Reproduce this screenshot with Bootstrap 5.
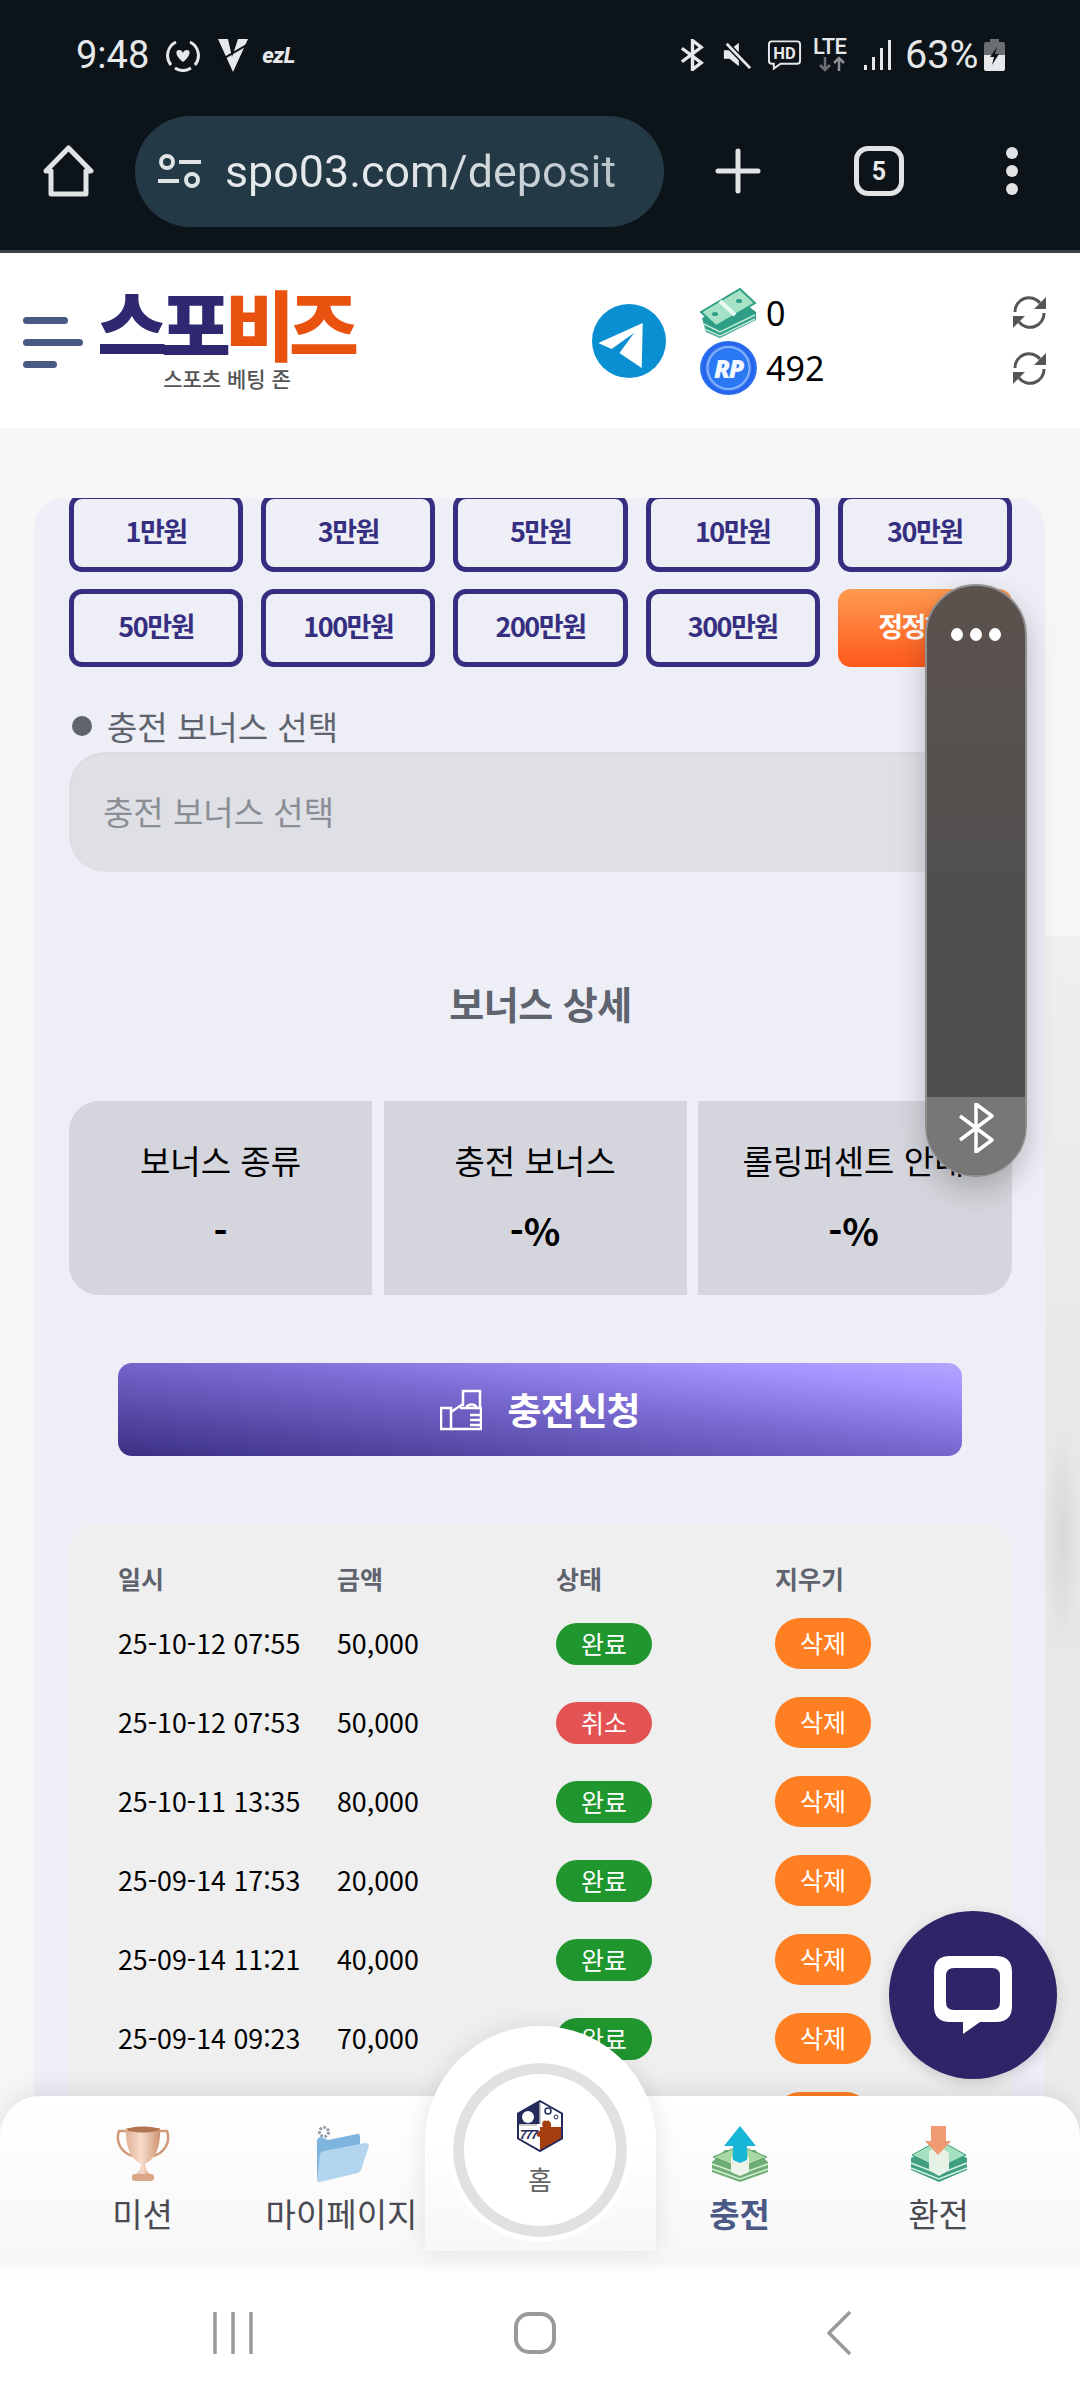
<!DOCTYPE html>
<html lang="ko">
<head>
    <meta charset="UTF-8">
    <meta name="viewport" content="width=device-width, initial-scale=1.0">
    <title>spo03 - deposit</title>
    <link href="https://cdn.jsdelivr.net/npm/bootstrap@5.3.0/dist/css/bootstrap.min.css" rel="stylesheet">
    <style>
        body {
            width: 1080px;
            height: 2400px;
            overflow: hidden;
            position: relative;
            background: #fff;
            font-family: "Noto Sans CJK KR", "Noto Sans", sans-serif;
        }
        /* phone chrome */
        .chrome-top { height: 253px; background: #0c1319; border-bottom: 3px solid #3a4248; color: #e6e8ea; }
        .status-row { height: 110px; padding: 0 75px 0 76px; font-family: Roboto, sans-serif; }
        .status-time { font-size: 38px; line-height: 1; margin-right: 17px; }
        .status-pct { width: 71px; font-size: 39.5px; line-height: 1; margin: 0 8px 0 13px; white-space: nowrap; }
        .ezl-text { font: italic 800 22px Roboto, sans-serif; margin-left: 12px; letter-spacing: -.5px; }
        .lte-box { width: 37px; line-height: 1; margin: 0 14px 0 11px; }
        .lte-text { font-size: 22px; font-weight: 500; line-height: 18px; display: block; letter-spacing: -.5px; }
        .tool-row { height: 140px; padding: 0 0 18px 43px; }
        .url-pill {
            width: 529px; height: 111px; margin: 0 51px 0 41px; padding-left: 23px; border-radius: 56px;
            background: #243946; font: 400 44.8px Roboto, sans-serif;
        }
        .url-text { margin-left: 24px; background: linear-gradient(90deg, #e6e9eb 40%, #b7c2c9); -webkit-background-clip: text; background-clip: text; color: transparent; }
        .tab-count {
            width: 50px; height: 50px; margin: 0 102px 0 93px; border: 5px solid #e1e3e5; border-radius: 14px;
            font: 700 25px/1 Roboto, sans-serif;
        }
        .dot-col { gap: 6px; }
        .dot-col i { width: 12px; height: 12px; border-radius: 50%; background: #e1e3e5; display: block; }
        /* site header */
        .site-head { height: 175px; background: #fff; padding: 0 34px 0 23px; }
        .burger { width: 72px; gap: 15px; padding-top: 4px; }
        .burger i { height: 7px; border-radius: 4px; background: #4a5a82; display: block; }
        .brand-box { width: 260px; margin-top: -2px; margin-right: 237px; text-align: center; }
        .brand-name { font-size: 76px; font-weight: 900; line-height: 66px; letter-spacing: -6px; color: #2d2870; white-space: nowrap; }
        .brand-name span { color: #e8510e; }
        .brand-sub { font-size: 21px; font-weight: 500; line-height: 26px; color: #555; margin-top: 10px; padding-left: 4px; }
        .money-col { margin-left: 34px; gap: 5px; }
        .money-row { height: 50px; gap: 9px; font: 400 34px/1 "Noto Sans", sans-serif; color: #000; }
        .coin-rp {
            width: 57px; height: 54px; border-radius: 50%; margin: -2px 0;
            background: radial-gradient(circle, #2a78f2 50%, #9cc2ff 52%, #1f62ea 60%, #4f8cff 90%, #1747d0);
            color: #f4f8ff; font: italic 900 25px/54px "Noto Sans", sans-serif; text-align: center; letter-spacing: -1.5px;
        }
        .refresh-col { gap: 23px; }
        /* page */
        .page-main {
            height: 1708px; overflow: hidden; padding: 70px 35px 0 34px;
            background: radial-gradient(ellipse closest-side, #d8d8d8, rgba(216,216,216,0)) right 1000px / 35px 220px no-repeat,
                linear-gradient(180deg, #efefef, #e6e6e6 50%, #ececec) right 508px / 35px 1200px no-repeat, #f6f6f6;
        }
        .deposit-panel { height: 1640px; background: #edeef6; border-radius: 30px 30px 0 0; padding: 0 33px 0 35px; overflow: hidden; }
        .amount-grid { display: grid; grid-template-columns: repeat(5, 1fr); gap: 17px 18px; margin-top: -4px; }
        .amount-btn {
            height: 78px; padding: 0 0 3px; border: 5px solid #362e80; border-radius: 13px; background: transparent;
            color: #362e80; font-size: 27px; font-weight: 700; letter-spacing: -1.5px; white-space: nowrap;
        }
        .amount-btn.reset-btn { border: 0; color: #fff; background: linear-gradient(180deg, #ff9a50, #ff591b); }
        .field-label { margin: 38px 0 5px; height: 42px; font-size: 33px; line-height: 42px; color: #5f636e; gap: 15px; padding-left: 3px; }
        .field-label i { width: 20px; height: 20px; border-radius: 50%; background: #5f636e; display: block; }
        .bonus-select {
            height: 120px; padding: 0 34px; border: 0; border-radius: 36px;
            background-color: #dee0e5; color: #8b8e95; font-size: 33px; box-shadow: inset 0 2px 2px rgba(0,0,0,.02);
        }
        .detail-title { margin-top: 107px; font-size: 38px; line-height: 48px; font-weight: 700; color: #5f636e; text-align: center; letter-spacing: -.5px; }
        .detail-grid { display: grid; grid-template-columns: 303px 303px 314px; column-gap: 11.5px; margin-top: 74px; height: 194px; border-radius: 30px; overflow: hidden; }
        .detail-cell { background: #d5d6dd; text-align: center; padding-top: 36px; color: #000; white-space: nowrap; }
        .detail-cell:last-child { padding-right: 3px; }
        .detail-name { font-size: 33px; line-height: 46px; }
        .detail-val { font-size: 38px; line-height: 50px; font-weight: 700; margin-top: 22px; }
        .apply-btn {
            width: 844px; height: 93px; margin: 68px 0 0 49px; border: 0; border-radius: 14px; color: #fff; gap: 25px;
            background: linear-gradient(to top right, #3b3084, #7a6bd2 55%, #a593ff 85%, #b3a6ff);
            font-size: 37px; font-weight: 700; letter-spacing: -1px;
        }
        .history-box { margin-top: 67px; height: 640px; border-radius: 30px; background: #efefef; padding: 31px 0 0 49px; overflow: hidden; }
        .history-table { width: 876px; table-layout: fixed; margin: 0; --bs-table-bg: transparent; }
        .history-table th { height: 50px; padding: 0; font-size: 25px; font-weight: 600; color: #5f636e; vertical-align: middle; }
        .history-table td { height: 79px; padding: 0; font-size: 26.8px; color: #000; vertical-align: middle; }
        .state-tag, .del-tag { width: 96px; padding: 0; border-radius: 25px; color: #fff; font-size: 25px; font-weight: 400; display: block; text-align: center; }
        .state-tag { height: 42px; line-height: 40px; border-radius: 21px; }
        .del-tag { height: 51px; line-height: 49px; background: #ff7f22; }
        .tag-ok { background: #1f962e; }
        .tag-cancel { background: #e35353; }
        /* bottom nav */
        .bottom-nav {
            height: 169px; margin-top: -40px; position: relative; padding: 0 43px; border-radius: 40px 40px 0 0;
            background: linear-gradient(180deg, #fff, #f7f7f7);
            box-shadow: 0 -6px 24px rgba(0,0,0,.08);
            display: grid; grid-template-columns: repeat(5, 199px);
        }
        .nav-cell { padding-top: 30px; text-align: center; color: #4a4a52; font-size: 33px; line-height: 40px; white-space: nowrap; }
        .nav-cell svg { display: block; margin: 0 auto 11px; height: 56px; }
        .nav-cell.now { color: #4a5a85; font-weight: 700; }
        .home-dome {
            position: absolute; left: 425px; top: -70px; width: 231px; height: 225px; border-radius: 116px 116px 0 0;
            background: linear-gradient(180deg, #fff 50%, #f7f7f7); box-shadow: 0 0 26px rgba(0,0,0,.1);
            padding: 32px 23px 0;
        }
        .home-ring { width: 184px; height: 184px; border-radius: 50%; background: #fff; border: 5px solid #fff; box-shadow: inset 0 0 0 11px #e1e1e1; text-align: center; padding-top: 37px; color: #666; font-size: 26px; line-height: 32px; }
        .home-ring svg { display: block; margin: 0 auto 11px; }
        .android-bar { height: 135px; background: #fff; padding: 0 0 0 213px; }
        .home-key { margin-left: 261px; }
        .back-key { margin-left: 270px; }
        /* floating things */
        .edge-pill {
            position: absolute; left: 925px; top: 584px; width: 102px; height: 593px; border-radius: 51px; overflow: hidden;
            border: 2px solid #8f8f8f; box-shadow: 0 12px 30px rgba(0,0,0,.22);
            background: linear-gradient(180deg, #5c524d, #4f4f4f 55%);
        }
        .pill-dots { gap: 7px; padding-top: 42px; height: 511px; }
        .pill-dots i { width: 12px; height: 13px; border-radius: 50%; background: #fff; display: block; }
        .pill-foot { height: 80px; background: #777; text-align: center; padding-top: 6px; }
        .chat-fab {
            position: absolute; left: 889px; top: 1911px; width: 168px; height: 168px; border-radius: 50%;
            background: #2e2568; box-shadow: 0 4px 14px rgba(0,0,0,.15);
        }
    </style>
</head>
<body>
    <div class="chrome-top">
        <div class="status-row d-flex align-items-center">
            <span class="status-time">9:48</span>
            <svg width="34" height="34" viewBox="0 0 34 34" fill="none">
                <path d="M10 4A15 15 0 0 0 5 27M24 4A15 15 0 0 1 29 27M9 30A15 15 0 0 0 25 30" stroke="#e6e8ea" stroke-width="3"/>
                <path d="M17 24C9 18 9 12 13 12C15 12 16.500 13 17 15C17.500 13 19 12 21 12C25 12 25 18 17 24Z" fill="#e6e8ea"/>
            </svg>
            <svg width="34" height="36" viewBox="0 0 34 36" class="ms-3"><path d="M2 2H12L16 20L22 2H32L17 35Z" fill="#e6e8ea"/><path d="M0 26L34 6" stroke="#0c1319" stroke-width="2"/></svg>
            <span class="ezl-text">ezL</span>
            <span class="ms-auto d-flex align-items-center">
                <svg width="27" height="32" viewBox="0 0 28 32" fill="none" stroke="#e6e8ea" stroke-width="3.500"><path d="M3 9L23 24L14 31V1L23 8L3 23"/></svg>
                <svg width="30" height="30" viewBox="0 0 32 30" class="ms-3"><path d="M2 10H8L18 2V27L8 19H2Z" fill="#e6e8ea"/><path d="M5 3L30 29" stroke="#0c1319" stroke-width="6"/><path d="M5 3L30 29" stroke="#e6e8ea" stroke-width="3"/></svg>
                <svg width="35" height="32" viewBox="0 0 36 32" style="margin-left:15px"><path d="M5 2H31Q34 2 34 5V22Q34 25 31 25H14L7 30V25H5Q2 25 2 22V5Q2 2 5 2Z" fill="none" stroke="#e6e8ea" stroke-width="2"/><text x="18" y="20" text-anchor="middle" font-family="Roboto" font-size="17" font-weight="700" fill="#e6e8ea">HD</text></svg>
                <span class="lte-box">
                    <span class="lte-text">LTE</span>
                    <svg width="30" height="16" viewBox="0 0 30 16" fill="none" stroke-width="2.500" class="d-block ms-1"><path d="M8 1V14M3 9L8 14L13 9" stroke="#6b7074"/><path d="M22 15V2M17 7L22 2L27 7" stroke="#8c9094"/></svg>
                </span>
                <svg width="28" height="30" viewBox="0 0 28 30" fill="#e6e8ea"><rect x="0" y="25" width="3" height="5"/><rect x="8" y="17" width="3" height="13"/><rect x="16" y="8" width="3" height="22"/><rect x="24" y="0" width="3" height="30"/></svg>
                <span class="status-pct">63%</span>
                <svg width="21" height="32" viewBox="0 0 21 32"><path d="M6 0H15V3H19Q21 3 21 5V16H0V5Q0 3 2 3H6Z" fill="#6a6e72"/><path d="M0 16H21V30Q21 32 19 32H2Q0 32 0 30Z" fill="#e6e8ea"/><path d="M13 8L6 18H10L8 26L15 15H11Z" fill="#0c1319"/></svg>
            </span>
        </div>
        <div class="tool-row d-flex align-items-center">
            <svg width="51" height="52" viewBox="0 0 51 52" fill="none" stroke="#e1e3e5" stroke-width="5" stroke-linejoin="round"><path d="M3 26L25.500 3L48 26H43V49H8V26Z"/></svg>
            <div class="url-pill d-flex align-items-center">
                <svg width="43" height="34" viewBox="0 0 43 34" fill="none" stroke="#dfe3e6" stroke-width="4"><circle cx="9" cy="8" r="6"/><path d="M21 8H43M0 27H21"/><circle cx="34" cy="26" r="6"/></svg>
                <span class="url-text">spo03.com/deposit</span>
            </div>
            <svg width="46" height="46" viewBox="0 0 46 46" stroke="#e1e3e5" stroke-width="5" stroke-linecap="round"><path d="M23 3V43M3 23H43"/></svg>
            <div class="tab-count d-flex align-items-center justify-content-center">5</div>
            <div class="dot-col d-flex flex-column"><i></i><i></i><i></i></div>
        </div>
    </div>

    <header class="site-head d-flex align-items-center">
        <div class="burger d-flex flex-column">
            <i style="width:45px"></i><i style="width:60px"></i><i style="width:34px"></i>
        </div>
        <div class="brand-box">
            <div class="brand-name">스포<span>비즈</span></div>
            <div class="brand-sub">스포츠 베팅 존</div>
        </div>
        <svg width="74" height="74" viewBox="0 0 74 74"><circle cx="37" cy="37" r="37" fill="#0a8fd2"/><path d="M50.700 19L6.300 39L19.600 45L42 29L27.500 49L49.700 64Z" fill="#fff"/></svg>
        <div class="money-col d-flex flex-column">
            <div class="money-row d-flex align-items-center">
                <svg width="57" height="50" viewBox="0 0 57 50">
                    <path d="M2 30L40 12L56 24V32L20 50L6 44Z" fill="#2f9e86"/>
                    <path d="M4 36L20 44L55 27M4 41L20 48L55 31" stroke="#bfe8d6" stroke-width="1.500" fill="none"/>
                    <path d="M1 24L40 1L55 15L16 38Z" fill="#a6e3c6" stroke="#2f9e86" stroke-width="2"/>
                    <path d="M20 13L35 27" stroke="#eafaf2" stroke-width="4"/>
                    <ellipse cx="15" cy="26" rx="3" ry="2" fill="#2f9e86"/><ellipse cx="39" cy="13" rx="3" ry="2" fill="#2f9e86"/>
                </svg>
                <span>0</span>
            </div>
            <div class="money-row d-flex align-items-center">
                <div class="coin-rp">RP</div>
                <span>492</span>
            </div>
        </div>
        <div class="refresh-col d-flex flex-column ms-auto">
            <svg width="33" height="33" viewBox="0 0 33 33" fill="none" stroke="#555" stroke-width="3"><path d="M2 16A14 14 0 0 1 27 7"/><path d="M31 17A14 14 0 0 1 6 26"/><path d="M33 1V13H21Z" fill="#555" stroke="none"/><path d="M0 32V20H12Z" fill="#555" stroke="none"/></svg>
            <svg width="33" height="33" viewBox="0 0 33 33" fill="none" stroke="#555" stroke-width="3"><path d="M2 16A14 14 0 0 1 27 7"/><path d="M31 17A14 14 0 0 1 6 26"/><path d="M33 1V13H21Z" fill="#555" stroke="none"/><path d="M0 32V20H12Z" fill="#555" stroke="none"/></svg>
        </div>
    </header>

    <main class="page-main">
        <div class="deposit-panel">
            <div class="amount-grid">
                <button class="btn amount-btn">1만원</button>
                <button class="btn amount-btn">3만원</button>
                <button class="btn amount-btn">5만원</button>
                <button class="btn amount-btn">10만원</button>
                <button class="btn amount-btn">30만원</button>
                <button class="btn amount-btn">50만원</button>
                <button class="btn amount-btn">100만원</button>
                <button class="btn amount-btn">200만원</button>
                <button class="btn amount-btn">300만원</button>
                <button class="btn amount-btn reset-btn">정정하기</button>
            </div>
            <div class="field-label d-flex align-items-center"><i></i>충전 보너스 선택</div>
            <select class="form-select bonus-select"><option>충전 보너스 선택</option></select>
            <div class="detail-title">보너스 상세</div>
            <div class="detail-grid">
                <div class="detail-cell"><div class="detail-name">보너스 종류</div><div class="detail-val">-</div></div>
                <div class="detail-cell"><div class="detail-name">충전 보너스</div><div class="detail-val">-%</div></div>
                <div class="detail-cell"><div class="detail-name">롤링퍼센트 안내</div><div class="detail-val">-%</div></div>
            </div>
            <button class="btn apply-btn d-flex align-items-center justify-content-center">
                <svg width="42" height="42" viewBox="0 0 42 42" fill="none" stroke="#fff" stroke-width="2.500"><rect x="1" y="19" width="10" height="21"/><path d="M11 23L23 15M23 17V2H40V19M20 19H41V40H11M30 26H42M30 31H42M30 36H42M26 19A6 6 0 0 1 37 19"/></svg>
                <span>충전신청</span>
            </button>
            <div class="history-box">
                <table class="table table-borderless history-table">
                    <thead><tr><th>일시</th><th>금액</th><th>상태</th><th>지우기</th></tr></thead>
                    <tbody>
                        <tr><td>25-10-12 07:55</td><td>50,000</td><td><span class="badge state-tag tag-ok">완료</span></td><td><span class="badge del-tag">삭제</span></td></tr>
                        <tr><td>25-10-12 07:53</td><td>50,000</td><td><span class="badge state-tag tag-cancel">취소</span></td><td><span class="badge del-tag">삭제</span></td></tr>
                        <tr><td>25-10-11 13:35</td><td>80,000</td><td><span class="badge state-tag tag-ok">완료</span></td><td><span class="badge del-tag">삭제</span></td></tr>
                        <tr><td>25-09-14 17:53</td><td>20,000</td><td><span class="badge state-tag tag-ok">완료</span></td><td><span class="badge del-tag">삭제</span></td></tr>
                        <tr><td>25-09-14 11:21</td><td>40,000</td><td><span class="badge state-tag tag-ok">완료</span></td><td><span class="badge del-tag">삭제</span></td></tr>
                        <tr><td>25-09-14 09:23</td><td>70,000</td><td><span class="badge state-tag tag-ok">완료</span></td><td><span class="badge del-tag">삭제</span></td></tr>
                        <tr><td></td><td></td><td></td><td><span class="badge del-tag">삭제</span></td></tr>
                    </tbody>
                </table>
            </div>
        </div>
    </main>

    <nav class="bottom-nav">
        <div class="nav-cell">
            <svg width="54" height="56" viewBox="0 0 54 56">
                <defs><linearGradient id="cupGrad" x1="0" x2="1"><stop offset="0" stop-color="#e2b094"/><stop offset=".45" stop-color="#f7dccb"/><stop offset="1" stop-color="#cf9472"/></linearGradient></defs>
                <path d="M11 5H3C-1 17 6 27 17 30M43 5H51C55 17 48 27 37 30" fill="none" stroke="#cf9a7a" stroke-width="2.500"/>
                <path d="M10 2H44C45 22 38 36 27 38C16 36 9 22 10 2Z" fill="url(#cupGrad)"/>
                <ellipse cx="27" cy="3.500" rx="16" ry="3" fill="#b07652"/>
                <path d="M25 37H29C29 43 31 46 35 49H19C23 46 25 43 25 37Z" fill="url(#cupGrad)"/>
                <rect x="16" y="48" width="22" height="7" rx="3" fill="#dba685"/>
            </svg>
            미션
        </div>
        <div class="nav-cell">
            <svg width="55" height="56" viewBox="0 0 55 56">
                <circle cx="10" cy="6" r="4.500" fill="none" stroke="#8d9aa6" stroke-width="3" stroke-dasharray="2.500 1.500"/>
                <path d="M3 14Q5 9 9 12L14 14L43 8Q46 7 46 11V42L3 54Z" fill="#7fb4de"/>
                <path d="M3 54L6 28Q7 25 10 25L51 17Q55 17 55 20L47 44Q46 46 44 47L6 56Q3 56 3 54Z" fill="#b3d5ee"/>
            </svg>
            마이페이지
        </div>
        <div></div>
        <div class="nav-cell now">
            <svg width="58" height="56" viewBox="0 0 58 56">
                <path d="M1 36L14 24H44L57 36V46L29 56L1 46Z" fill="#6fae74"/>
                <path d="M1 38L29 48L57 38M1 43L29 53L57 43" stroke="#d8efd6" stroke-width="1.500" fill="none"/>
                <path d="M2 31L29 20L56 31L29 42Z" fill="#a7d8a4" stroke="#5f9f66"/>
                <path d="M20 31V46L29 50L38 46V31L29 36Z" fill="#eef3ea"/>
                <path d="M29 0L45 20H36V34L29 37L22 34V20H13Z" fill="#17b5d6"/>
            </svg>
            충전
        </div>
        <div class="nav-cell">
            <svg width="58" height="56" viewBox="0 0 58 56">
                <path d="M1 32L29 16L57 32V44L29 56L1 44Z" fill="#3f9f80"/>
                <path d="M1 37L29 48L57 37M1 42L29 53L57 42" stroke="#d4f0e2" stroke-width="1.500" fill="none"/>
                <path d="M2 29L29 14L56 29L29 42Z" fill="#a5e0c0" stroke="#3f9f80"/>
                <path d="M19 25L29 20L39 27V44L29 50L19 44Z" fill="#e6f2e6"/>
                <path d="M21 0H36V15H41L28 29L15 15H21Z" fill="#f09a73"/>
            </svg>
            환전
        </div>
        <div class="home-dome">
            <div class="home-ring">
                <svg width="46" height="52" viewBox="0 0 46 52">
                    <path d="M23 1L45 13.500V38.500L23 51L1 38.500V13.500Z" fill="#fff"/>
                    <path d="M23 1L1 13.500V24H23Z" fill="#232a5c"/>
                    <circle cx="11" cy="17" r="6" fill="#fff"/>
                    <path d="M45 27H34C35 23 32 19 29 21C26 19 24 24 26 27H23V31C19 31 18 37 23 37V51L45 38.500Z" fill="#a63f10"/>
                    <path d="M23 1V24M1 25H20" stroke="#b9b9b9" stroke-width="1.500"/>
                    <text x="3" y="39" font-family="Liberation Sans" font-style="italic" font-weight="700" font-size="12" fill="#232a5c" letter-spacing="-1">777</text>
                    <circle cx="31" cy="11" r="3" fill="none" stroke="#232a5c" stroke-width="1.500"/><circle cx="39" cy="17" r="2" fill="none" stroke="#232a5c"/>
                    <path d="M23 1L45 13.500V38.500L23 51L1 38.500V13.500Z" fill="none" stroke="#232a5c" stroke-width="2"/>
                </svg>
                홈
            </div>
        </div>
    </nav>

    <div class="android-bar d-flex align-items-center">
        <svg width="40" height="42" viewBox="0 0 40 42" stroke="#9a9a9a" stroke-width="3.500"><path d="M2 0V42M20 0V42M38 0V42"/></svg>
        <svg width="42" height="42" viewBox="0 0 42 42" fill="none" stroke="#9a9a9a" stroke-width="4" class="home-key"><rect x="2" y="2" width="38" height="38" rx="13"/></svg>
        <svg width="25" height="44" viewBox="0 0 25 44" fill="none" stroke="#9a9a9a" stroke-width="3.500" stroke-linejoin="round" class="back-key"><path d="M24 1L3 22L24 43"/></svg>
    </div>

    <div class="edge-pill">
        <div class="pill-dots d-flex justify-content-center"><i></i><i></i><i></i></div>
        <div class="pill-foot">
            <svg width="36" height="50" viewBox="0 0 36 50" fill="none" stroke="#fff" stroke-width="3.500" stroke-linejoin="round"><path d="M2 13L34 37L18 49V1L34 13L2 37"/></svg>
        </div>
    </div>

    <div class="chat-fab d-flex align-items-center justify-content-center">
        <svg width="78" height="78" viewBox="0 0 78 78"><path fill="#fff" fill-rule="evenodd" d="M16 0H62Q78 0 78 16V50Q78 66 62 66H46L29 78V66H16Q0 66 0 50V16Q0 0 16 0ZM20 12Q12 12 12 20V46Q12 54 20 54H58Q66 54 66 46V20Q66 12 58 12Z"/></svg>
    </div>

    <script src="https://cdn.jsdelivr.net/npm/bootstrap@5.3.0/dist/js/bootstrap.bundle.min.js"></script>
</body>
</html>
